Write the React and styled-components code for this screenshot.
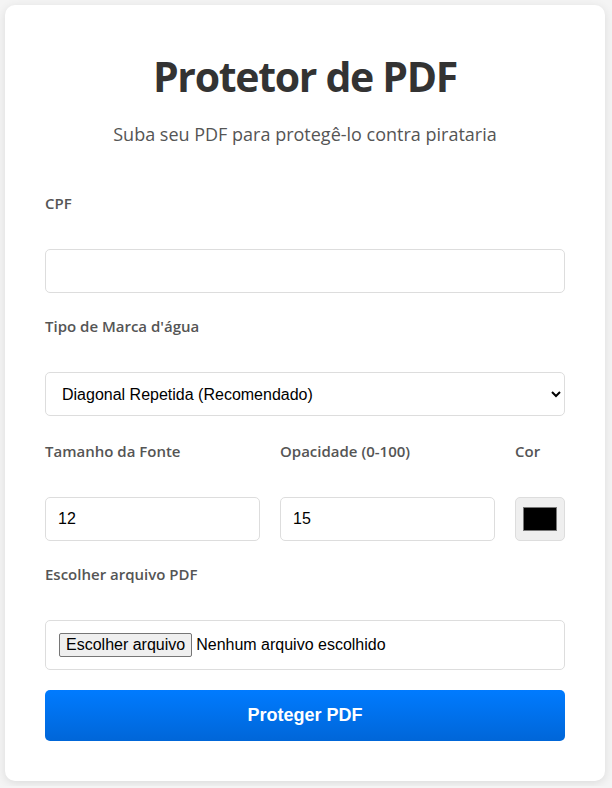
import React from "react";
import styled, { createGlobalStyle } from "styled-components";

const GlobalStyle = createGlobalStyle`
  body {
    margin: 0;
    padding: 5px;
    background: #f4f4f4;
    font-family: "Open Sans", "Noto Sans", sans-serif;
  }
`;

const Card = styled.div`
  max-width: 600px;
  box-sizing: border-box;
  background: #fff;
  border-radius: 10px;
  box-shadow: 0 2px 10px rgba(0, 0, 0, 0.1);
  padding: 43px 40px 40px 40px;
`;

const Title = styled.h1`
  margin: 0;
  text-align: center;
  color: #333;
  font-size: 41px;
  line-height: 57px;
  font-weight: 700;
  letter-spacing: -1.3px;
`;

const Subtitle = styled.p`
  margin: 17px 0 47px 0;
  text-align: center;
  color: #555;
  font-size: 18px;
`;

const Group = styled.div`
  margin-bottom: ${(p) => p.$gap ?? 23}px;
`;

const Label = styled.label`
  display: block;
  font-size: 15px;
  line-height: 20px;
  font-weight: 600;
  color: #555;
  margin-bottom: 36px;
`;

const fieldBase = `
  display: block;
  width: 100%;
  box-sizing: border-box;
  border: 1px solid #ddd;
  border-radius: 5px;
  background: #fff;
  font-family: "Liberation Sans", Arial, sans-serif;
  font-size: 16px;
  color: #000;
`;

const TextInput = styled.input`
  ${fieldBase}
  padding: 12px;
  height: 44px;
`;

const Select = styled.select`
  ${fieldBase}
  padding: 0 8px 0 12px;
  height: 44px;
`;

const Row = styled.div`
  display: grid;
  grid-template-columns: 1fr 1fr 50px;
  column-gap: 20px;
`;

const ColorInput = styled.input`
  display: block;
  width: 50px;
  height: 44px;
  box-sizing: border-box;
  padding: 5px;
  border: 1px solid #ddd;
  border-radius: 5px;
  background: #efefef;
`;

const FileBox = styled.label`
  ${fieldBase}
  display: flex;
  align-items: center;
  height: 50px;
  padding: 0 13px;
`;

const HiddenFile = styled.input`
  display: none;
`;

const FileButton = styled.span`
  display: inline-block;
  font-family: "Liberation Sans", Arial, sans-serif;
  font-size: 16px;
  line-height: 18px;
  padding: 2px 6px;
  background: #efefef;
  border: 1px solid #767676;
  border-radius: 2px;
  color: #000;
`;

const FileName = styled.span`
  margin-left: 4px;
  color: #000;
`;

const SubmitButton = styled.button`
  display: block;
  width: 100%;
  height: 51px;
  border: none;
  border-radius: 5px;
  background: linear-gradient(to bottom, #007bff, #0066d8);
  color: #fff;
  font-family: "Liberation Sans", Arial, sans-serif;
  font-size: 18px;
  font-weight: 700;
  cursor: pointer;
`;

export default function App() {
  return (
    <>
      <GlobalStyle />
      <Card>
        <Title>Protetor de PDF</Title>
        <Subtitle>Suba seu PDF para protegê-lo contra pirataria</Subtitle>
        <Group>
          <Label>CPF</Label>
          <TextInput type="text" />
        </Group>
        <Group $gap={25}>
          <Label>Tipo de Marca d'água</Label>
          <Select defaultValue="diagonal">
            <option value="diagonal">Diagonal Repetida (Recomendado)</option>
            <option value="centro">Centro</option>
            <option value="rodape">Rodapé</option>
          </Select>
        </Group>
        <Group>
          <Row>
            <div>
              <Label>Tamanho da Fonte</Label>
              <TextInput type="number" defaultValue="12" />
            </div>
            <div>
              <Label>Opacidade (0-100)</Label>
              <TextInput type="number" defaultValue="15" />
            </div>
            <div>
              <Label>Cor</Label>
              <ColorInput type="color" defaultValue="#000000" />
            </div>
          </Row>
        </Group>
        <Group $gap={20}>
          <Label>Escolher arquivo PDF</Label>
          <FileBox>
            <HiddenFile type="file" accept="application/pdf" />
            <FileButton>Escolher arquivo</FileButton>
            <FileName>Nenhum arquivo escolhido</FileName>
          </FileBox>
        </Group>
        <SubmitButton type="button">Proteger PDF</SubmitButton>
      </Card>
    </>
  );
}
